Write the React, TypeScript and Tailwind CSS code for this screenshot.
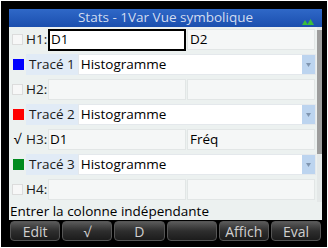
import React from "react";

const F = { fontFamily: '"Open Sans", "Noto Sans", sans-serif' };

function HRow({ label, check, f1, f2, selected }: { label: string; check?: boolean; f1?: string; f2?: string; selected?: boolean }) {
  return (
    <div className="flex items-center h-[25px] pr-[1px]">
      <div className="w-[15px] flex justify-center">
        {check ? (
          <span className="text-[13.5px] text-black leading-none">√</span>
        ) : (
          <div className="w-[11px] h-[11px] bg-[#f7f7f7] border border-[#dcdcdc]" />
        )}
      </div>
      <span className="w-[23px] text-[13.5px] text-[#1a1a1a] pl-[1px] whitespace-nowrap">{label}</span>
      {selected ? (
        <div className="w-[138px] h-[22px] border-2 border-black bg-white flex items-center px-[1px] text-[13.5px] text-black">{f1}</div>
      ) : (
        <div className="w-[138px] h-[21px] border border-[#e2e6e6] bg-[#f5f7f7] flex items-center px-[1px] text-[13.5px] text-black">{f1}</div>
      )}
      <div className="flex-1 ml-[1px] h-[21px] border border-[#e2e6e6] bg-[#f5f7f7] flex items-center px-[2px] text-[13.5px] text-black">{f2}</div>
    </div>
  );
}

function TRow({ n, color }: { n: number; color: string }) {
  return (
    <div className="flex items-center h-[25px]">
      <div className="w-[16px] flex justify-center">
        <div className="w-[11px] h-[11px]" style={{ backgroundColor: color }} />
      </div>
      <div className="h-[21px] bg-[#e1ebf6] flex items-center px-[3px] text-[13.5px] text-[#1a1a1a]">Tracé {n}</div>
      <div className="flex-1 h-[21px] bg-white border border-[#e4e8ec] flex items-center pl-[2px] text-[13.5px] text-black">
        <span className="flex-1">Histogramme</span>
        <div className="w-[13px] h-[19px] bg-[#bcd4ef] flex items-center justify-center">
          <svg width="5" height="4" viewBox="0 0 5 4"><path d="M0 0 L5 0 L2.5 4 Z" fill="#7f95b0" /></svg>
        </div>
      </div>
    </div>
  );
}

function Btn({ t }: { t: string }) {
  return (
    <div className="flex-1 h-[20px] rounded-[4px] bg-gradient-to-b from-[#5a5a5a] via-[#2e2e2e] to-[#1c1c1c] border border-[#555555] flex items-center justify-center text-[14px] text-[#d0d0d0]">
      {t}
    </div>
  );
}

export default function App() {
  return (
    <div className="w-[328px] h-[248px] bg-black border border-white" style={F}>
      <div className="ml-[8px] mt-[8px] w-[313px] h-[235px] bg-[#ecf1f0] flex flex-col">
        <div className="h-[18px] bg-gradient-to-b from-[#2f68c8] to-[#1b4fae] relative flex items-center justify-center">
          <span className="text-[13.5px] text-[#d2dcf0] leading-none">Stats - 1Var Vue symbolique</span>
          <svg className="absolute right-[8px] top-[9px]" width="12" height="7" viewBox="0 0 12 7">
            <path d="M0 7 L3 2 L6 7 Z" fill="#3bbf3b" />
            <path d="M5 7 L8.5 1 L12 7 Z" fill="#3bbf3b" />
          </svg>
        </div>
        <div className="flex">
          <div className="flex-1 flex flex-col pl-[1px] pr-[1px]">
            <HRow label="H1:" f1="D1" f2="D2" selected />
            <TRow n={1} color="#0000ff" />
            <HRow label="H2:" />
            <TRow n={2} color="#ff0000" />
            <HRow label="H3:" check f1="D1" f2="Fréq" />
            <TRow n={3} color="#008a1e" />
            <HRow label="H4:" />
          </div>
          <div className="w-[5px] flex flex-col pt-[3px] bg-[#e4e8e8]">
            <div className="h-[124px] bg-[#9d9d9d]" />
          </div>
        </div>
        <div className="h-[18px] flex items-center pl-[1px] text-[13.5px] text-black">Entrer la colonne indépendante</div>
        <div className="flex-1 flex items-start gap-[2px] px-[1px] pt-[1px] bg-black">
          <Btn t="Edit" />
          <Btn t="√" />
          <Btn t="D" />
          <Btn t="" />
          <Btn t="Affich" />
          <Btn t="Eval" />
        </div>
      </div>
    </div>
  );
}
